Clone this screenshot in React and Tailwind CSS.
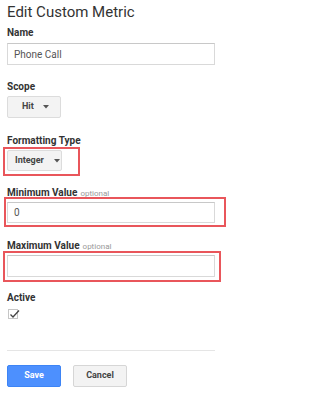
import React from "react";

const font = { fontFamily: "Roboto, 'Liberation Sans', Arial, sans-serif" };

function Label({ children, optional }) {
  return (
    <div className="h-[12px] text-[10px] leading-[12px] font-bold text-[#333] whitespace-nowrap">
      {children}
      {optional && <span className="ml-[3px] text-[8px] font-normal text-[#999]">optional</span>}
    </div>
  );
}

function Caret() {
  return (
    <svg width="6" height="4" viewBox="0 0 6 4" className="block">
      <path d="M0 0 L6 0 L3 3.5 Z" fill="#555" />
    </svg>
  );
}

export default function App() {
  return (
    <div className="w-[235px] h-[400px] bg-white pl-[7px] pt-[1px]" style={font}>
      <div className="h-[22px] text-[15px] leading-[22px] text-[#333]">Edit Custom Metric</div>

      <div className="mt-[4px]"><Label>Name</Label></div>
      <div className="mt-[4px] w-[208px] h-[22px] border border-[#d9d9d9] border-t-[#c8c8c8] flex items-center pl-[6px] text-[10px] text-[#555]">
        Phone Call
      </div>

      <div className="mt-[16px]"><Label>Scope</Label></div>
      <div className="mt-[3px] w-[54px] h-[22px] border border-[#dcdcdc] rounded-[2px] bg-[#f3f3f3] flex items-center pl-[14px] gap-[9px] text-[9px] font-bold text-[#444]">
        <span>Hit</span>
        <Caret />
      </div>

      <div className="mt-[17px]"><Label>Formatting Type</Label></div>
      <div className="relative mt-[3px] w-[55px] h-[21px]">
        <div className="w-[55px] h-[21px] border border-[#dcdcdc] rounded-[2px] bg-[#f3f3f3] flex items-center pl-[7px] gap-[10px] text-[9px] font-bold text-[#444]">
          <span>Integer</span>
          <Caret />
        </div>
        <div className="absolute left-[-4px] top-[-3px] w-[77px] h-[29px] border-2 border-[#e9565b]" />
      </div>

      <div className="mt-[16px]"><Label optional>Minimum Value</Label></div>
      <div className="relative mt-[3px] w-[208px] h-[21px]">
        <div className="w-[208px] h-[21px] border border-[#d9d9d9] border-t-[#c8c8c8] flex items-center pl-[6px] text-[10px] text-[#555]">
          0
        </div>
        <div className="absolute left-[-3px] top-[-5px] w-[222px] h-[30px] border-2 border-[#e9565b]" />
      </div>

      <div className="mt-[17px]"><Label optional>Maximum Value</Label></div>
      <div className="relative mt-[3px] w-[208px] h-[22px]">
        <div className="w-[208px] h-[22px] border border-[#d9d9d9] border-t-[#c8c8c8]" />
        <div className="absolute left-[-4px] top-[-4px] w-[218px] h-[31px] border-2 border-[#e9565b]" />
      </div>

      <div className="mt-[15px]"><Label>Active</Label></div>
      <div className="mt-[5px] ml-[1px] w-[10px] h-[10px] border border-[#c6c6c6] relative">
        <svg width="12" height="10" viewBox="0 0 12 10" className="absolute left-[0px] top-[-1px]">
          <path d="M1.5 5.5 L4 8 L10 1.5" fill="none" stroke="#444" strokeWidth="1.3" />
        </svg>
      </div>

      <div className="mt-[31px] w-[208px] h-px bg-[#e5e5e5]" />

      <div className="mt-[14px] flex gap-[12px]">
        <div className="w-[54px] h-[22px] rounded-[2px] bg-[#4d90fe] border border-[#3d84f5] flex items-center justify-center text-[9px] font-bold text-white">
          Save
        </div>
        <div className="w-[54px] h-[22px] rounded-[2px] bg-[#f3f3f3] border border-[#d6d6d6] flex items-center justify-center text-[9px] font-bold text-[#444]">
          Cancel
        </div>
      </div>
    </div>
  );
}
